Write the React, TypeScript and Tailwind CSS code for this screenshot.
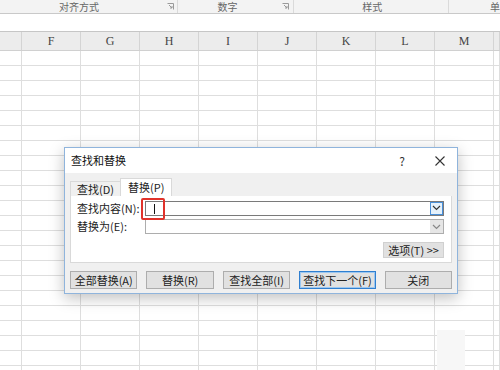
import React from "react";

const cols = ["", "F", "G", "H", "I", "J", "K", "L", "M", ""];
const widths = ["w-[22px]", "w-[59px]", "w-[59px]", "w-[59px]", "w-[59px]", "w-[59px]", "w-[59px]", "w-[59px]", "w-[59px]", "w-[6px]"];
const rows = Array.from({ length: 22 });

const cjk = { fontFamily: '"Noto Sans CJK SC", "Noto Sans", sans-serif' };

function Launcher() {
  return (
    <svg width="7" height="7" viewBox="0 0 7 7" className="text-[#9a9a9a]">
      <path d="M0.5 0.5h6v6" fill="none" stroke="currentColor" strokeWidth="1" />
      <path d="M2 2l3 3M3 5h2V3" fill="none" stroke="currentColor" strokeWidth="1" />
    </svg>
  );
}

function Chevron({ color }: { color: string }) {
  return (
    <svg width="9" height="6" viewBox="0 0 9 6">
      <path d="M1 1l3.5 3.5L8 1" fill="none" stroke={color} strokeWidth="1.2" />
    </svg>
  );
}

function Btn({ label, w, active }: { label: string; w: string; active?: boolean }) {
  return (
    <div
      className={`${w} h-[18px] flex items-center justify-center text-[11px] text-[#222] bg-[#e1e1e1] border ${
        active ? "border-[#2f7fd0] shadow-[inset_0_0_0_1px_#9cc7f0]" : "border-[#adadad]"
      }`}
    >
      {label}
    </div>
  );
}

export default function App() {
  return (
    <div className="relative w-[500px] h-[370px] overflow-hidden bg-white" style={cjk}>
      {/* ribbon */}
      <div className="flex h-[14px] bg-[#f3f3f3] border-b border-[#c9c9c9] text-[10px] text-[#666] leading-[13px]">
        <div className="w-[178px] flex items-start relative border-r border-[#dadada]">
          <span className="ml-[59px]">对齐方式</span>
          <span className="absolute right-[3px] top-[3px]"><Launcher /></span>
        </div>
        <div className="w-[117px] flex items-start relative border-r border-[#dadada]">
          <span className="ml-[40px]">数字</span>
          <span className="absolute right-[4px] top-[3px]"><Launcher /></span>
        </div>
        <div className="w-[155px] flex items-start border-r border-[#dadada]">
          <span className="ml-[68px]">样式</span>
        </div>
        <div className="flex-1 flex items-start">
          <span className="ml-[41px]">单</span>
        </div>
      </div>
      {/* formula bar strip */}
      <div className="h-[18px] bg-white border-b border-[#c6c6c6]" />
      {/* column headers */}
      <div className="flex h-[19px] bg-[#ececec] border-b border-[#d0d0d0]">
        {cols.map((c, i) => (
          <div
            key={i}
            className={`${widths[i]} shrink-0 border-r border-[#d4d4d4] flex items-center justify-center text-[12px] text-[#444]`}
            style={{ fontFamily: '"Liberation Serif", serif' }}
          >
            {c}
          </div>
        ))}
      </div>
      {/* grid */}
      {rows.map((_, r) => (
        <div key={r} className="flex h-[15px] border-b border-[#dedede]">
          {cols.map((_, i) => (
            <div key={i} className={`${widths[i]} shrink-0 border-r border-[#dedede]`} />
          ))}
        </div>
      ))}

      {/* watermark patch */}
      <div className="absolute left-[437px] top-[330px] w-[28px] h-[40px] bg-[#f7f7f7]" />

      {/* dialog */}
      <div className="absolute left-[64px] top-[147px] w-[394px] h-[147px] border border-[#8fb4dc] bg-[#f0f0f0] shadow-[0_4px_14px_rgba(0,0,0,0.25)] flex flex-col">
        <div className="h-[25px] bg-white flex items-center pl-[6px] pr-[12px] text-[11px] text-[#111]">
          <span>查找和替换</span>
          <span className="ml-auto mr-[30px] text-[12px] text-[#333]">?</span>
          <svg width="10" height="10" viewBox="0 0 10 10">
            <path d="M0.5 0.5l9 9M9.5 0.5l-9 9" stroke="#333" strokeWidth="1.1" />
          </svg>
        </div>
        <div className="flex flex-col px-[5px] pt-[5px]">
          <div className="flex items-end h-[18px] text-[11px] text-[#222]">
            <div className="h-[15px] px-[6px] flex items-center border border-b-0 border-[#d9d9d9] bg-[#f0f0f0]">查找(D)</div>
            <div className="h-[18px] px-[7px] flex items-center border border-b-0 border-[#d9d9d9] bg-white -ml-[1px]">替换(P)</div>
          </div>
          <div className="h-[67px] bg-white border border-t-0 border-[#d9d9d9] flex flex-col pl-[6px] pr-[7px] pt-[4px] gap-[3px] text-[11px] text-[#222]">
            <div className="flex items-center h-[16px]">
              <span className="w-[68px]">查找内容(N):</span>
              <div className="relative flex-1 h-[15px] border border-[#7a7a7a] flex items-center justify-end">
                <div className="absolute -left-[5px] -top-[4px] w-[24px] h-[22px] border-2 border-[#e0322b] rounded-[2px]" />
                <div className="absolute left-[8px] top-[2px] w-px h-[10px] bg-[#111]" />
                <div className="w-[13px] h-[13px] border border-[#4a90d9] bg-[#e5f1fb] flex items-center justify-center">
                  <Chevron color="#333" />
                </div>
              </div>
            </div>
            <div className="flex items-center h-[15px]">
              <span className="w-[68px]">替换为(E):</span>
              <div className="flex-1 h-[15px] border border-[#adadad] flex items-center justify-end">
                <div className="w-[13px] h-[13px] bg-[#e6e6e6] flex items-center justify-center">
                  <Chevron color="#888" />
                </div>
              </div>
            </div>
            <div className="flex justify-end mt-[5px]">
              <div className="w-[61px] h-[16px] bg-[#e1e1e1] border border-[#d0d0d0] flex items-center justify-center text-[11px]">
                选项(T) &gt;&gt;
              </div>
            </div>
          </div>
        </div>
        <div className="flex items-center gap-[9px] px-[5px] mt-[8px]">
          <Btn label="全部替换(A)" w="w-[68px]" />
          <Btn label="替换(R)" w="w-[68px]" />
          <Btn label="查找全部(I)" w="w-[68px]" />
          <Btn label="查找下一个(F)" w="w-[77px]" active />
          <Btn label="关闭" w="w-[68px]" />
        </div>
      </div>
    </div>
  );
}
